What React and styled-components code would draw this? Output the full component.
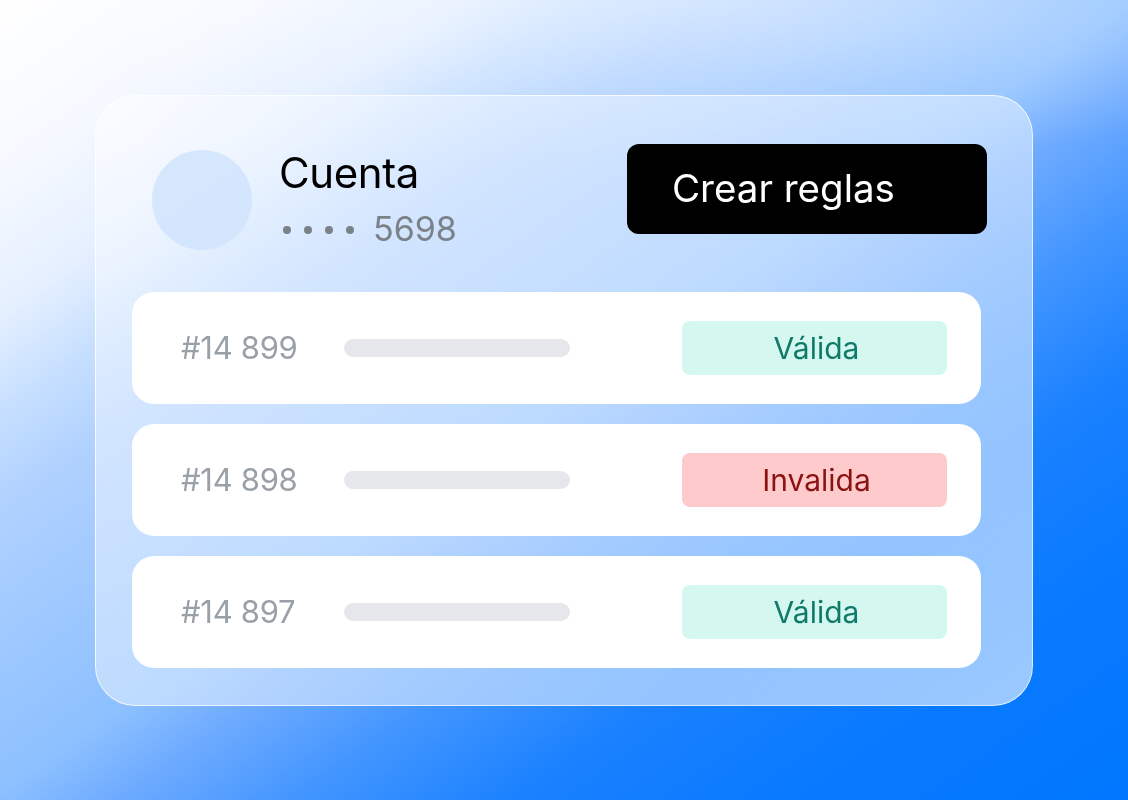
import React from "react";
import styled, { createGlobalStyle } from "styled-components";

const Global = createGlobalStyle`
  html, body { margin: 0; padding: 0; }
  body { font-family: Inter, "Noto Sans", Arial, sans-serif; }
  * { box-sizing: border-box; }
`;

const Page = styled.div`
  width: 1128px;
  height: 800px;
  overflow: hidden;
  display: flex;
  align-items: center;
  justify-content: center;
  background:
    radial-gradient(ellipse 760px 160px at 720px 0, rgba(255,255,255,0.45) 0%, rgba(255,255,255,0) 100%),
    linear-gradient(145deg, #ffffff 0%, #f4f8ff 12%, #e4efff 20%, #c6dfff 26%, #b0d1ff 32%, #a0c9ff 40%, #8cc0ff 50%, #70acff 55%, #4496ff 63%, #1a81ff 73%, #0a7aff 84%, #0077ff 100%);
`;

const Card = styled.div`
  width: 938px;
  height: 611px;
  border-radius: 40px;
  border: 1.5px solid rgba(255, 255, 255, 0.75);
  background: linear-gradient(145deg, rgba(255,255,255,0.45) 0%, rgba(255,255,255,0.42) 45%, rgba(255,255,255,0.6) 100%);
  backdrop-filter: blur(24px);
  padding: 48px 45px 36px 36px;
  display: flex;
  flex-direction: column;
`;

const Header = styled.div`
  display: flex;
  align-items: flex-start;
  padding-left: 20px;
  height: 106px;
  margin-bottom: 42px;
`;

const Avatar = styled.div`
  width: 100px;
  height: 100px;
  border-radius: 50%;
  background: rgba(210, 228, 253, 0.9);
  margin-top: 6px;
  flex: none;
`;

const Info = styled.div`
  margin-left: 27px;
  display: flex;
  flex-direction: column;
  padding-top: 5px;
`;

const Title = styled.div`
  font-size: 42px;
  line-height: 48px;
  color: #000;
  font-weight: 400;
  letter-spacing: -0.4px;
`;

const Masked = styled.div`
  font-size: 34px;
  line-height: 40px;
  color: #7b8188;
  margin-top: 12px;
  display: flex;
  align-items: center;
`;

const Dots = styled.span`
  display: flex;
  gap: 13px;
  margin-right: 19px;
  margin-left: 4px;
  padding-top: 2px;
`;

const Dot = styled.span`
  width: 8px;
  height: 8px;
  border-radius: 50%;
  background: #7b8188;
`;

const Button = styled.button`
  margin-left: auto;
  width: 360px;
  height: 90px;
  border: none;
  border-radius: 12px;
  background: #000;
  color: #fff;
  font-family: inherit;
  font-size: 38.5px;
  text-align: left;
  padding: 0 0 2px 45px;
  cursor: pointer;
`;

const List = styled.div`
  display: flex;
  flex-direction: column;
  gap: 20px;
  margin-right: 6px;
`;

const Row = styled.div`
  height: 112px;
  background: #fff;
  border-radius: 22px;
  display: flex;
  align-items: center;
  padding: 0 34px 0 49px;
`;

const Number = styled.span`
  width: 163px;
  font-size: 31px;
  color: #9aa0a8;
  letter-spacing: -0.3px;
`;

const Bar = styled.div`
  width: 226px;
  height: 18px;
  border-radius: 9px;
  background: #e5e7ea;
`;

const Pill = styled.div`
  margin-left: auto;
  width: 265px;
  height: 54px;
  border-radius: 8px;
  display: flex;
  align-items: center;
  justify-content: center;
  font-size: 30px;
  padding-left: 4px;
  background: ${(p) => (p.$valid ? "#d4f8ef" : "#fecacb")};
  color: ${(p) => (p.$valid ? "#0f7a69" : "#8a1212")};
`;

const rows = [
  { id: "#14 899", valid: true },
  { id: "#14 898", valid: false },
  { id: "#14 897", valid: true },
];

export default function App() {
  return (
    <>
      <Global />
      <Page>
        <Card>
          <Header>
            <Avatar />
            <Info>
              <Title>Cuenta</Title>
              <Masked>
                <Dots>
                  <Dot />
                  <Dot />
                  <Dot />
                  <Dot />
                </Dots>
                5698
              </Masked>
            </Info>
            <Button>Crear reglas</Button>
          </Header>
          <List>
            {rows.map((r) => (
              <Row key={r.id}>
                <Number>{r.id}</Number>
                <Bar />
                <Pill $valid={r.valid}>{r.valid ? "Válida" : "Invalida"}</Pill>
              </Row>
            ))}
          </List>
        </Card>
      </Page>
    </>
  );
}
